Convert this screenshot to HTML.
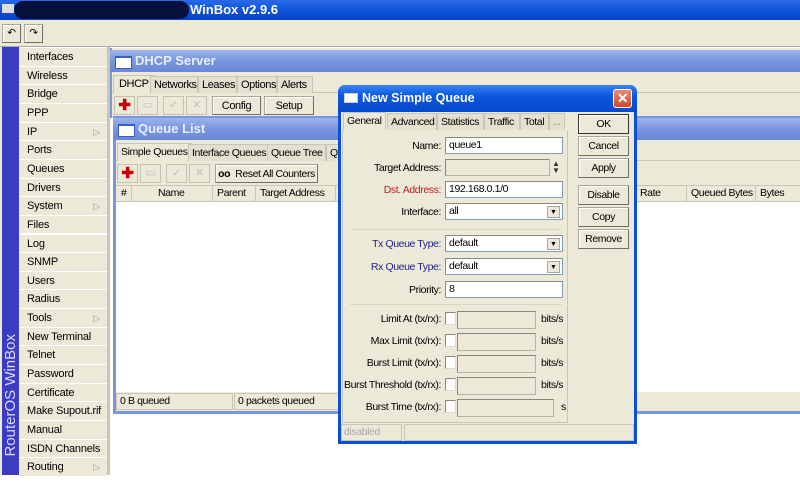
<!DOCTYPE html>
<html><head><meta charset="utf-8"><style>
*{box-sizing:border-box;margin:0;padding:0}
body{width:800px;height:475px;overflow:hidden;position:relative;background:#fff;font-family:"Liberation Sans",sans-serif;font-size:10.5px;letter-spacing:-0.4px;color:#000;white-space:nowrap}
.a{position:absolute}
.bg{background:#ece9d8}
.btn{position:absolute;background:#ece9d8;border:1px solid #a9a79b;border-right-color:#716f64;border-bottom-color:#716f64;text-align:center;line-height:18px;box-shadow:inset 1px 1px #fff}
.tab{position:absolute;border:1px solid #c9c6b6;border-bottom:none;background:#e3e0d0;line-height:16px;padding:0 3px}
.mi{position:absolute;left:20px;width:87px;height:18.65px;border-bottom:1px solid #fff;line-height:18px;padding-left:7px;background:#ece9d8;font-size:11px;letter-spacing:-0.2px}
.arr{position:absolute;right:7px;top:0;color:#999;font-size:9px}
.in{position:absolute;background:#fff;border:1px solid #7f9db9;border-top-color:#8a8a7e;border-left-color:#8a8a7e;line-height:15px;padding-left:3px}
.dis{background:#ece9d8;border:1px solid #b6b3a4;border-top-color:#8a877a;border-left-color:#8a877a}
.lb{position:absolute;right:359px;text-align:right;white-space:nowrap}
.dd{position:absolute;right:2px;top:2px;width:13px;height:12px;background:#ece9d8;border:1px solid #a9a79b;font-size:7px;text-align:center;line-height:11px;letter-spacing:0}
.cb{position:absolute;width:11px;height:13px;background:#fff;border:1px solid #8a877a;border-right-color:#ddd;border-bottom-color:#ddd}
.hdr{position:absolute;border-right:1px solid #c9c6b6;line-height:17px;padding-left:4px}
.wt{position:absolute;height:22px;background:linear-gradient(#9db3ec,#7896de 50%,#6a88d6);color:#e8eeff;font-weight:bold;font-size:13px;letter-spacing:0;line-height:22px;padding-left:25px}
.wt:before{content:"";position:absolute;left:5px;top:6px;width:15px;height:10px;background:#fff;border:1px solid #3a5fc0;border-top-width:2px}
.ic{position:absolute;width:21px;height:19px;border:1px solid #c5c2b2;background:#ece9d8;text-align:center;line-height:17px;color:#bbb}
</style></head><body>
<div class="a" style="left:0;top:0;width:800px;height:20px;background:linear-gradient(#2a6ae8,#0a4fd6 60%,#0842c0)"></div>
<div class="a" style="left:14px;top:1px;width:175px;height:18px;background:#05113a;border-radius:9px"></div>
<div class="a" style="left:2px;top:4px;width:12px;height:9px;background:#ddd"></div>
<div class="a" style="left:190px;top:2px;color:#fff;font-weight:bold;font-size:13px;letter-spacing:0">WinBox v2.9.6</div>
<div class="a bg" style="left:0;top:20px;width:800px;height:27px;border-bottom:1px solid #aaa"></div>
<div class="btn" style="left:2px;top:24px;width:19px;height:19px;line-height:16px">↶</div>
<div class="btn" style="left:24px;top:24px;width:19px;height:19px;line-height:16px">↷</div>
<div class="a" style="left:0;top:47px;width:20px;height:428px;background:#ece9d8"></div>
<div class="a" style="left:2px;top:47px;width:17px;height:428px;background:#3c3cc2"></div>
<div class="a" style="left:-64px;top:400px;width:150px;height:18px;transform:rotate(-90deg);transform-origin:center;color:#d8d8ff;font-size:15px;letter-spacing:0;white-space:nowrap;text-align:right">RouterOS WinBox</div>
<div class="a" style="left:107px;top:47px;width:3px;height:428px;background:#c9c6b6"></div>
<div class="mi" style="top:48px">Interfaces</div>
<div class="mi" style="top:66.65px">Wireless</div>
<div class="mi" style="top:85.3px">Bridge</div>
<div class="mi" style="top:103.95px">PPP</div>
<div class="mi" style="top:122.6px">IP<span class="arr">▷</span></div>
<div class="mi" style="top:141.25px">Ports</div>
<div class="mi" style="top:159.9px">Queues</div>
<div class="mi" style="top:178.55px">Drivers</div>
<div class="mi" style="top:197.2px">System<span class="arr">▷</span></div>
<div class="mi" style="top:215.85px">Files</div>
<div class="mi" style="top:234.5px">Log</div>
<div class="mi" style="top:253.15px">SNMP</div>
<div class="mi" style="top:271.8px">Users</div>
<div class="mi" style="top:290.45px">Radius</div>
<div class="mi" style="top:309.1px">Tools<span class="arr">▷</span></div>
<div class="mi" style="top:327.75px">New Terminal</div>
<div class="mi" style="top:346.4px">Telnet</div>
<div class="mi" style="top:365.05px">Password</div>
<div class="mi" style="top:383.7px">Certificate</div>
<div class="mi" style="top:402.35px">Make Supout.rif</div>
<div class="mi" style="top:421px">Manual</div>
<div class="mi" style="top:439.65px">ISDN Channels</div>
<div class="mi" style="top:458.3px">Routing<span class="arr">▷</span></div>
<div class="a bg" style="left:110px;top:48px;width:690px;height:70px;border-left:2px solid #7896de"></div>
<div class="wt" style="left:110px;top:50px;width:690px">DHCP Server</div>
<div class="a" style="left:112px;top:92px;width:688px;height:1px;background:#c9c6b6"></div>
<div class="tab" style="left:113px;top:75px;background:#ece9d8;height:18px;padding:0 5px;font-size:11px">DHCP</div>
<div class="tab" style="left:150px;top:76px;width:48px;font-size:11px">Networks</div>
<div class="tab" style="left:198px;top:76px;width:39px;font-size:11px">Leases</div>
<div class="tab" style="left:237px;top:76px;width:40px;font-size:11px">Options</div>
<div class="tab" style="left:277px;top:76px;width:36px;font-size:11px">Alerts</div>
<div class="ic" style="left:114px;top:96px;color:#c00;font-weight:bold;font-size:15px">✚</div>
<div class="ic" style="left:137px;top:96px">▭</div>
<div class="ic" style="left:163px;top:96px">✓</div>
<div class="ic" style="left:186px;top:96px">✕</div>
<div class="btn" style="left:212px;top:96px;width:49px;height:19px;font-size:11px">Config</div>
<div class="btn" style="left:264px;top:96px;width:50px;height:19px;font-size:11px">Setup</div>
<div class="a" style="left:113px;top:116px;width:687px;height:298px;background:#7896de"></div>
<div class="wt" style="left:113px;top:118px;width:687px">Queue List</div>
<div class="a bg" style="left:116px;top:140px;width:684px;height:271px"></div>
<div class="a" style="left:116px;top:160px;width:684px;height:1px;background:#c9c6b6"></div>
<div class="tab" style="left:117px;top:143px;background:#ece9d8;height:18px">Simple Queues</div>
<div class="tab" style="left:188px;top:144px">Interface Queues</div>
<div class="tab" style="left:267px;top:144px">Queue Tree</div>
<div class="tab" style="left:326px;top:144px">Qu</div>
<div class="ic" style="left:117px;top:164px;color:#c00;font-weight:bold;font-size:15px">✚</div>
<div class="ic" style="left:140px;top:164px">▭</div>
<div class="ic" style="left:166px;top:164px">✓</div>
<div class="ic" style="left:189px;top:164px">✕</div>
<div class="btn" style="left:215px;top:164px;width:103px;height:19px"><b>oo</b>&nbsp; Reset All Counters</div>
<div class="a" style="left:116px;top:185px;width:684px;height:17px;border-top:1px solid #c9c6b6;border-bottom:1px solid #c9c6b6"></div>
<div class="hdr" style="left:117px;top:185px;width:15px">#</div>
<div class="hdr" style="left:132px;top:185px;width:22px"></div>
<div class="hdr" style="left:154px;top:185px;width:59px">Name</div>
<div class="hdr" style="left:213px;top:185px;width:43px">Parent</div>
<div class="hdr" style="left:256px;top:185px;width:80px">Target Address</div>
<div class="hdr" style="left:636px;top:185px;width:51px">Rate</div>
<div class="hdr" style="left:687px;top:185px;width:69px">Queued Bytes</div>
<div class="hdr" style="left:756px;top:185px;width:44px;border:none">Bytes</div>
<div class="a" style="left:116px;top:202px;width:684px;height:190px;background:#fff"></div>
<div class="a" style="left:116px;top:393px;width:117px;height:17px;border:1px solid #c9c6b6;line-height:15px;padding-left:3px">0 B queued</div>
<div class="a" style="left:234px;top:393px;width:110px;height:17px;border:1px solid #c9c6b6;line-height:15px;padding-left:3px">0 packets queued</div>
<div class="a" style="left:338px;top:85px;width:299px;height:359px;background:#0a4fd6;border-radius:7px 7px 0 0"></div>
<div class="a" style="left:338px;top:85px;width:299px;height:27px;background:linear-gradient(#3c84f4,#0a58e0 40%,#0848c8);border-radius:7px 7px 0 0"></div>
<div class="a" style="left:344px;top:93px;width:14px;height:10px;background:#fff;border:1px solid #ccc"></div>
<div class="a" style="left:362px;top:91px;color:#fff;font-weight:bold;font-size:12.5px;letter-spacing:0">New Simple Queue</div>
<div class="a" style="left:613px;top:89px;width:19px;height:19px;background:linear-gradient(#e88a70,#d04a26);border:1px solid #fff;border-radius:3px;color:#fff;font-weight:bold;text-align:center;line-height:16px;font-size:14px">✕</div>
<div class="a bg" style="left:341px;top:112px;width:293px;height:329px"></div>
<div class="a" style="left:342px;top:129px;width:226px;height:294px;border:1px solid #c9c6b6;border-top-color:#fff"></div>
<div class="tab" style="left:343px;top:112px;background:#ece9d8;height:18px">General</div>
<div class="tab" style="left:387px;top:113px;width:50px">Advanced</div>
<div class="tab" style="left:437px;top:113px;width:47px">Statistics</div>
<div class="tab" style="left:484px;top:113px;width:36px">Traffic</div>
<div class="tab" style="left:520px;top:113px;width:29px">Total</div>
<div class="tab" style="left:549px;top:113px;color:#888">...</div>
<div class="btn" style="left:578px;top:114px;width:51px;height:20px;border:1px solid #333">OK</div>
<div class="btn" style="left:578px;top:136px;width:51px;height:20px">Cancel</div>
<div class="btn" style="left:578px;top:158px;width:51px;height:20px">Apply</div>
<div class="btn" style="left:578px;top:185px;width:51px;height:20px">Disable</div>
<div class="btn" style="left:578px;top:207px;width:51px;height:20px">Copy</div>
<div class="btn" style="left:578px;top:229px;width:51px;height:20px">Remove</div>
<div class="lb" style="top:140px">Name:</div><div class="in" style="left:445px;top:137px;width:118px;height:17px">queue1</div>
<div class="lb" style="top:162px">Target Address:</div><div class="in dis" style="left:445px;top:159px;width:105px;height:17px"></div>
<div class="a" style="left:552px;top:160px;font-size:8px;line-height:7px;color:#333">▲<br>▼</div>
<div class="lb" style="top:184px;color:#b22">Dst. Address:</div><div class="in" style="left:445px;top:181px;width:118px;height:17px">192.168.0.1/0</div>
<div class="lb" style="top:206px">Interface:</div><div class="in" style="left:445px;top:203px;width:118px;height:17px">all<div class="dd">▼</div></div>
<div class="a" style="left:350px;top:229px;width:212px;height:1px;background:#d8d5c6"></div>
<div class="lb" style="top:238px;color:#22228a">Tx Queue Type:</div><div class="in" style="left:445px;top:235px;width:118px;height:17px">default<div class="dd">▼</div></div>
<div class="lb" style="top:261px;color:#22228a">Rx Queue Type:</div><div class="in" style="left:445px;top:258px;width:118px;height:17px">default<div class="dd">▼</div></div>
<div class="lb" style="top:284px">Priority:</div><div class="in" style="left:445px;top:281px;width:118px;height:17px">8</div>
<div class="a" style="left:350px;top:304px;width:212px;height:1px;background:#d8d5c6"></div>
<div class="lb" style="top:313px">Limit At (tx/rx):</div><div class="cb" style="left:445px;top:312px"></div><div class="in dis" style="left:457px;top:311px;width:79px;height:18px"></div><div class="a" style="left:541px;top:313px">bits/s</div>
<div class="lb" style="top:335px">Max Limit (tx/rx):</div><div class="cb" style="left:445px;top:334px"></div><div class="in dis" style="left:457px;top:333px;width:79px;height:18px"></div><div class="a" style="left:541px;top:335px">bits/s</div>
<div class="lb" style="top:357px">Burst Limit (tx/rx):</div><div class="cb" style="left:445px;top:356px"></div><div class="in dis" style="left:457px;top:355px;width:79px;height:18px"></div><div class="a" style="left:541px;top:357px">bits/s</div>
<div class="lb" style="top:379px">Burst Threshold (tx/rx):</div><div class="cb" style="left:445px;top:378px"></div><div class="in dis" style="left:457px;top:377px;width:79px;height:18px"></div><div class="a" style="left:541px;top:379px">bits/s</div>
<div class="lb" style="top:401px">Burst Time (tx/rx):</div><div class="cb" style="left:445px;top:400px"></div><div class="in dis" style="left:457px;top:399px;width:97px;height:18px"></div><div class="a" style="left:561px;top:401px">s</div>
<div class="a" style="left:341px;top:424px;width:61px;height:17px;border:1px solid #c9c6b6;color:#aaa;line-height:15px;padding-left:2px">disabled</div>
<div class="a" style="left:404px;top:424px;width:230px;height:17px;border:1px solid #c9c6b6"></div>
</body></html>
